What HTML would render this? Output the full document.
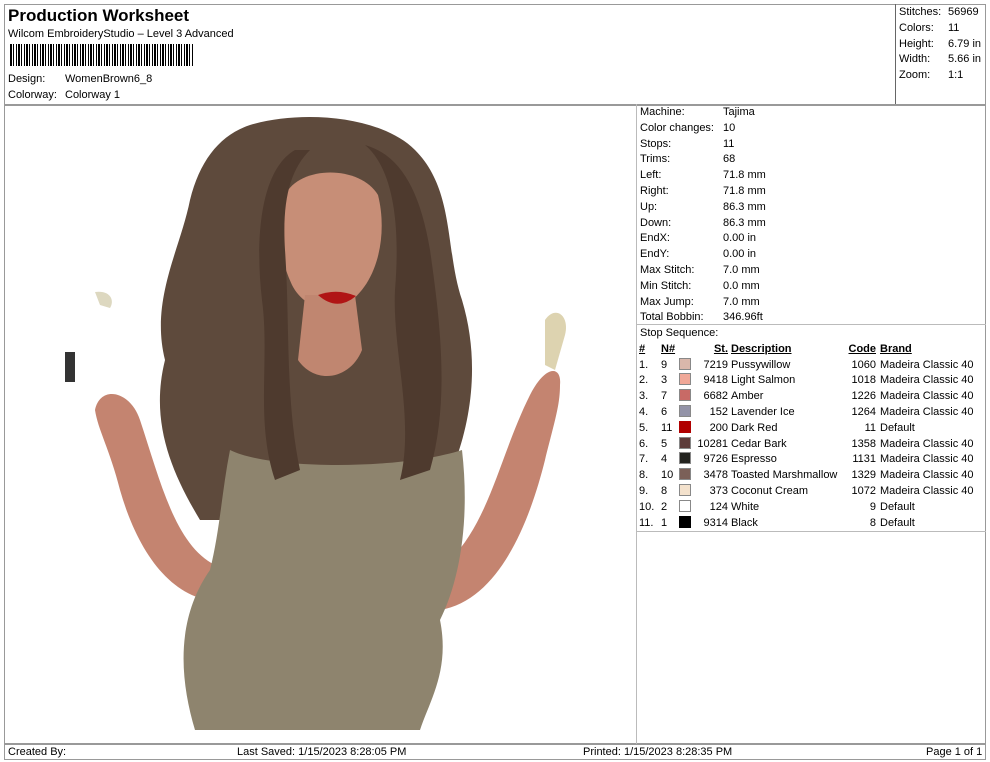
<!DOCTYPE html>
<html><head><style>
body{margin:0;width:990px;height:762px;background:#fff;font-family:"Liberation Sans",Arial,sans-serif;font-size:11px;color:#000;position:relative;overflow:hidden}
.a{position:absolute;white-space:nowrap}
.ln{position:absolute;background:#999}
table{border-collapse:collapse;font-size:11px}
td{padding:0;height:15.8px;white-space:nowrap}
.sw{display:inline-block;width:10px;height:10px;border:1px solid #888;vertical-align:-1px}
u{text-decoration:underline}
</style></head><body>
<div class="ln" style="left:4px;top:4px;width:982px;height:1px"></div>
<div class="ln" style="left:4px;top:4px;width:1px;height:756px"></div>
<div class="ln" style="left:985px;top:4px;width:1px;height:756px"></div>
<div class="ln" style="left:4px;top:104px;width:982px;height:2px"></div>
<div class="ln" style="left:4px;top:743px;width:982px;height:2px"></div>
<div class="ln" style="left:4px;top:759px;width:982px;height:1px"></div>
<div class="ln" style="left:895px;top:4px;width:1px;height:100px;background:#666"></div>
<div class="ln" style="left:636px;top:104px;width:1px;height:640px;background:#bbb"></div>
<div class="ln" style="left:636px;top:324px;width:350px;height:1px;background:#bbb"></div>
<div class="ln" style="left:636px;top:531px;width:350px;height:1px;background:#bbb"></div>

<div class="a" style="left:8px;top:6px;font-size:17px;font-weight:bold">Production Worksheet</div>
<div class="a" style="left:8px;top:28px">Wilcom EmbroideryStudio – Level 3 Advanced</div>
<div class="a" style="left:10px;top:44px;width:184px;height:22px;background:repeating-linear-gradient(90deg,#000 0 2px,#fff 2px 3px,#000 3px 4px,#fff 4px 6px,#000 6px 7px,#fff 7px 8px)"></div>
<div class="a" style="left:8px;top:73px">Design:</div><div class="a" style="left:65px;top:73px">WomenBrown6_8</div>
<div class="a" style="left:8px;top:89px">Colorway:</div><div class="a" style="left:65px;top:89px">Colorway 1</div>

<div class="a" style="left:899px;top:5px;line-height:15.8px">Stitches:<br>Colors:<br>Height:<br>Width:<br>Zoom:</div>
<div class="a" style="left:948px;top:5px;line-height:15.8px">56969<br>11<br>6.79 in<br>5.66 in<br>1:1</div>

<div class="a" style="left:640px;top:105px;line-height:15.8px">Machine:<br>Color changes:<br>Stops:<br>Trims:<br>Left:<br>Right:<br>Up:<br>Down:<br>EndX:<br>EndY:<br>Max Stitch:<br>Min Stitch:<br>Max Jump:<br>Total Bobbin:<br>Stop Sequence:</div>
<div class="a" style="left:723px;top:105px;line-height:15.8px">Tajima<br>10<br>11<br>68<br>71.8 mm<br>71.8 mm<br>86.3 mm<br>86.3 mm<br>0.00 in<br>0.00 in<br>7.0 mm<br>0.0 mm<br>7.0 mm<br>346.96ft</div>

<table class="a" style="left:639px;top:341px">
<tr style="font-weight:bold"><td style="width:22px"><u>#</u></td><td style="width:18px"><u>N#</u></td><td style="width:18px"></td><td style="width:31px;text-align:right"><u>St.</u></td><td style="width:117px;padding-left:3px"><u>Description</u></td><td style="width:28px;text-align:right"><u>Code</u></td><td style="padding-left:4px"><u>Brand</u></td></tr>
<tr><td>1.</td><td>9</td><td><span class="sw" style="background:#d9b7ab"></span></td><td align="right">7219</td><td style="padding-left:3px">Pussywillow</td><td align="right">1060</td><td style="padding-left:4px">Madeira Classic 40</td></tr>
<tr><td>2.</td><td>3</td><td><span class="sw" style="background:#f0a898"></span></td><td align="right">9418</td><td style="padding-left:3px">Light Salmon</td><td align="right">1018</td><td style="padding-left:4px">Madeira Classic 40</td></tr>
<tr><td>3.</td><td>7</td><td><span class="sw" style="background:#c86a66"></span></td><td align="right">6682</td><td style="padding-left:3px">Amber</td><td align="right">1226</td><td style="padding-left:4px">Madeira Classic 40</td></tr>
<tr><td>4.</td><td>6</td><td><span class="sw" style="background:#9393a8"></span></td><td align="right">152</td><td style="padding-left:3px">Lavender Ice</td><td align="right">1264</td><td style="padding-left:4px">Madeira Classic 40</td></tr>
<tr><td>5.</td><td>11</td><td><span class="sw" style="background:#b00000;border-color:#b00000"></span></td><td align="right">200</td><td style="padding-left:3px">Dark Red</td><td align="right">11</td><td style="padding-left:4px">Default</td></tr>
<tr><td>6.</td><td>5</td><td><span class="sw" style="background:#5e3c3a"></span></td><td align="right">10281</td><td style="padding-left:3px">Cedar Bark</td><td align="right">1358</td><td style="padding-left:4px">Madeira Classic 40</td></tr>
<tr><td>7.</td><td>4</td><td><span class="sw" style="background:#23231f"></span></td><td align="right">9726</td><td style="padding-left:3px">Espresso</td><td align="right">1131</td><td style="padding-left:4px">Madeira Classic 40</td></tr>
<tr><td>8.</td><td>10</td><td><span class="sw" style="background:#7b6058"></span></td><td align="right">3478</td><td style="padding-left:3px">Toasted Marshmallow</td><td align="right">1329</td><td style="padding-left:4px">Madeira Classic 40</td></tr>
<tr><td>9.</td><td>8</td><td><span class="sw" style="background:#f3e1cc"></span></td><td align="right">373</td><td style="padding-left:3px">Coconut Cream</td><td align="right">1072</td><td style="padding-left:4px">Madeira Classic 40</td></tr>
<tr><td>10.</td><td>2</td><td><span class="sw" style="background:#fff"></span></td><td align="right">124</td><td style="padding-left:3px">White</td><td align="right">9</td><td style="padding-left:4px">Default</td></tr>
<tr><td>11.</td><td>1</td><td><span class="sw" style="background:#000;border-color:#000"></span></td><td align="right">9314</td><td style="padding-left:3px">Black</td><td align="right">8</td><td style="padding-left:4px">Default</td></tr>
</table>

<svg class="a" style="left:5px;top:106px" width="631" height="637" viewBox="5 106 631 637">
<path d="M250 125 C300 110 380 115 415 150 C455 190 445 250 462 300 C480 360 472 420 452 470 L420 520 L200 520 C170 470 150 420 165 360 C150 300 180 250 190 200 C200 160 220 135 250 125Z" fill="#5e4a3c"/>
<path d="M95 410 C100 385 130 390 140 420 C160 480 175 545 215 565 L240 600 C180 612 140 560 120 490 C110 450 98 430 95 410Z" fill="#c48470"/>
<path d="M560 385 C562 365 545 365 530 395 C500 455 490 520 450 560 L440 610 C500 600 530 520 545 460 C555 420 560 405 560 385Z" fill="#c48470"/>
<path d="M230 450 C270 470 400 470 462 450 C470 520 460 580 440 620 C450 670 430 700 420 730 L195 730 C180 680 175 620 210 570 C220 530 222 490 230 450Z" fill="#8e846e"/>
<path d="M285 195 C300 165 360 165 378 195 C388 235 378 285 345 305 C325 315 302 305 292 285 C278 255 275 225 285 195Z" fill="#c78e77"/>
<path d="M305 295 L298 360 C315 385 350 380 362 350 L355 295Z" fill="#c08670"/>
<path d="M318 295 Q337 288 356 296 Q337 312 318 295Z" fill="#b01515"/>
<path d="M295 150 C260 170 255 240 262 300 C270 360 255 420 275 480 L300 470 C285 400 290 320 285 250 C282 200 290 170 310 150Z" fill="#4e3a2e"/>
<path d="M365 145 C395 170 400 230 395 290 C392 350 415 420 400 480 L430 470 C450 400 440 320 430 250 C420 190 400 155 365 145Z" fill="#4e3a2e"/>
<rect x="65" y="352" width="10" height="30" fill="#333"/>
<path d="M95 292 C110 290 115 300 110 308 L100 305Z" fill="#ddd8c0"/>
<path d="M545 320 C555 305 570 315 565 335 L555 370 L545 365Z" fill="#ddd3b0"/>
</svg>

<div class="a" style="left:8px;top:746px">Created By:</div>
<div class="a" style="left:237px;top:746px">Last Saved: 1/15/2023 8:28:05 PM</div>
<div class="a" style="left:583px;top:746px">Printed: 1/15/2023 8:28:35 PM</div>
<div class="a" style="left:926px;top:746px">Page 1 of 1</div>
</body></html>
